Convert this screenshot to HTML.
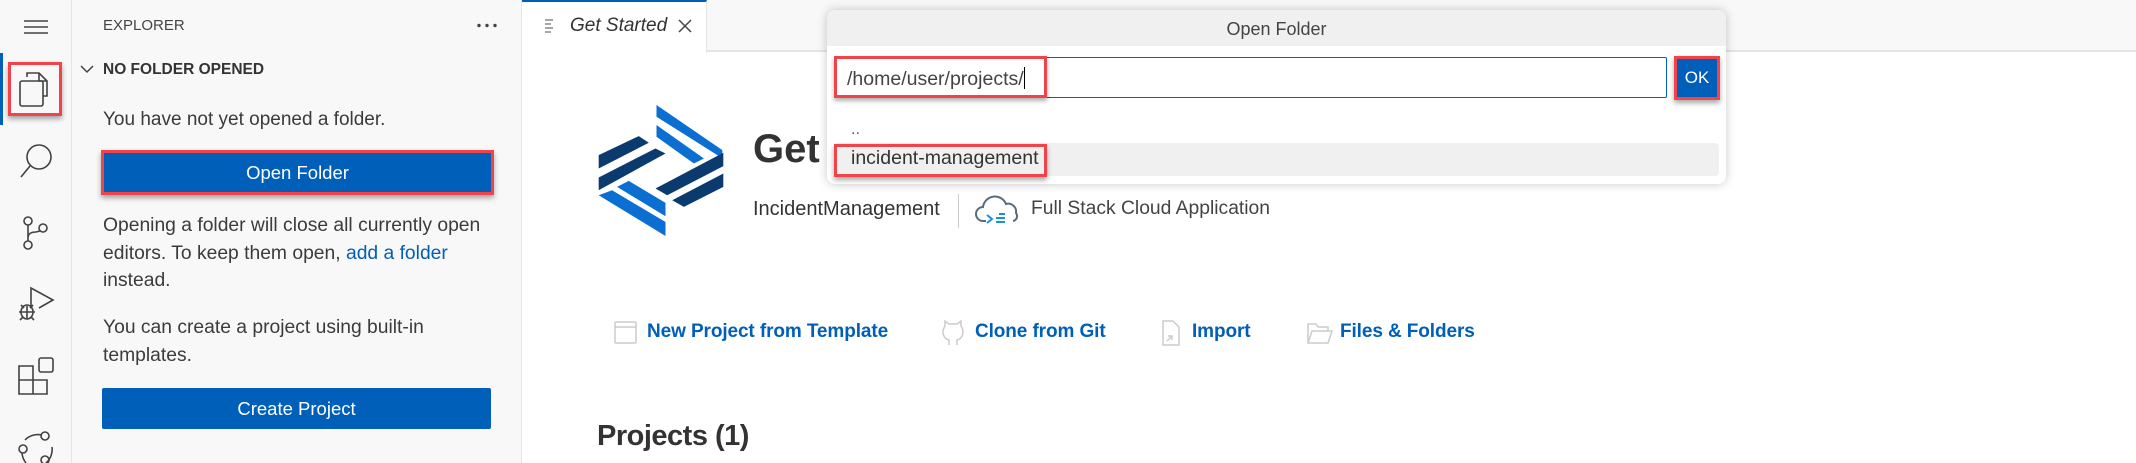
<!DOCTYPE html>
<html><head><meta charset="utf-8"><style>
*{box-sizing:border-box;margin:0;padding:0}
body{width:2136px;height:463px;overflow:hidden;background:#fff;font-family:"Liberation Sans",sans-serif;color:#3b3b3b;position:relative}
.abs{position:absolute}
.act{left:0;top:0;width:72px;height:463px;background:#f8f8f8;border-right:1px solid #e5e5e5}
.side{left:72px;top:0;width:450px;height:463px;background:#f8f8f8;border-right:1px solid #e5e5e5}
.t{white-space:nowrap;position:absolute}
.btn{position:absolute;background:#005fb8;color:#fff;font-size:18.5px;text-align:center;border-radius:2px}
.red{position:absolute;border:3px solid #f0434a;box-shadow:0 3px 5px rgba(0,0,0,.35)}
.link{color:#005fb8;font-weight:bold;font-size:19px;position:absolute;top:321px;white-space:nowrap;letter-spacing:-0.1px}
</style></head><body>
<div class="abs act">
 <svg class="abs" style="left:0;top:0" width="72" height="463" fill="none" stroke="#424242" stroke-width="1.6">
  <path d="M24 21h24M24 27h24M24 33h24"/>
  <rect x="0" y="53" width="3" height="72" fill="#005fb8" stroke="none"/>
  <path d="M27 77v-4h12l8 8v15h-4"/><path d="M39 73v8h8"/><rect x="20" y="81" width="23" height="25" rx="2"/>
  <circle cx="39" cy="157" r="12"/><path d="M30 166l-9 11"/>
  <circle cx="28" cy="221" r="4"/><circle cx="28" cy="245" r="4"/><circle cx="43" cy="228" r="4"/><path d="M28 225v16M28 238q0-6 8-6l4-1"/>
  <path d="M31 307v-19l22 12-14 8"/><ellipse cx="27" cy="312" rx="6" ry="7"/><path d="M19 312h16M21 305l3 3M33 305l-3 3M20 320l3-3M34 320l-3-3M27 306v13"/>
  <path d="M19 366h14v28H19zM19 380h28v14H33"/><rect x="39" y="358" width="14" height="14" rx="2"/>
  <path d="M25 440a18 18 0 0 1 17-5M52 447a18 18 0 0 1-6 16M22 453a18 18 0 0 0 4 10"/><circle cx="45" cy="436" r="4"/><circle cx="23" cy="449" r="4"/><circle cx="45" cy="460" r="4"/>
 </svg>
 <div class="red" style="left:8px;top:62px;width:54px;height:54px"></div>
</div>
<div class="abs side">
 <div class="t" style="left:31px;top:17px;font-size:15px;color:#444">EXPLORER</div>
 <svg class="abs" style="left:405px;top:23px" width="20" height="5" fill="#444"><circle cx="2" cy="2.5" r="1.7"/><circle cx="10" cy="2.5" r="1.7"/><circle cx="18" cy="2.5" r="1.7"/></svg>
 <svg class="abs" style="left:8px;top:64px" width="14" height="10" fill="none" stroke="#444" stroke-width="1.5"><path d="M1 2l6 6 6-6"/></svg>
 <div class="t" style="left:31px;top:61px;font-size:15.5px;font-weight:bold;color:#333">NO FOLDER OPENED</div>
 <div style="position:absolute;left:31px;top:106px;font-size:19px;line-height:27.5px;color:#3b3b3b;white-space:nowrap">You have not yet opened a folder.</div>
 <div class="btn" style="left:30px;top:151px;width:391px;height:43px;line-height:43px">Open Folder</div>
 <div class="red" style="left:29px;top:150px;width:393px;height:45px"></div>
 <div style="position:absolute;left:31px;top:212px;font-size:19.3px;line-height:27.5px;white-space:nowrap">Opening a folder will close all currently open<br>editors. To keep them open, <span style="color:#005fb8">add a folder</span><br>instead.</div>
 <div style="position:absolute;left:31px;top:314px;font-size:19.3px;line-height:27.5px;white-space:nowrap">You can create a project using built-in<br>templates.</div>
 <div class="btn" style="left:30px;top:388px;width:389px;height:41px;line-height:41px">Create Project</div>
</div>
<!-- tab bar -->
<div class="abs" style="left:522px;top:0;width:1614px;height:52px;background:#f8f8f8;border-bottom:2px solid #e5e5e5"></div>
<div class="abs" style="left:522px;top:0;width:185px;height:53px;background:#fff;border-top:2px solid #005fb8;border-right:1px solid #e5e5e5"></div>
<svg class="abs" style="left:545px;top:19px" width="10" height="14" stroke="#888" stroke-width="1.5"><path d="M0 1h8M0 5h6M0 9h8M0 13h6"/></svg>
<div class="t" style="left:570px;top:15px;font-size:19px;font-style:italic;color:#333">Get Started</div>
<svg class="abs" style="left:678px;top:19px" width="14" height="14" stroke="#444" stroke-width="1.5"><path d="M1 1l12 12M13 1L1 13"/></svg>
<!-- welcome -->
<svg class="abs" style="left:597px;top:105px" width="127" height="132" viewBox="50 45 380 395">
 <g fill="#0a6fd1"><polygon points="228,45 425,180 425,200 410,195 228,80"/><polygon points="228,105 370,205 340,220 228,140"/><polygon points="55,315 95,300 255,395 255,437"/><polygon points="110,290 145,272 255,338 255,378"/></g>
 <g fill="#0b3a6e"><polygon points="55,195 175,138 205,158 55,235"/><polygon points="55,262 225,175 255,190 55,300"/><polygon points="225,295 428,188 428,228 260,315"/><polygon points="275,330 428,250 428,290 310,350"/></g>
</svg>
<div class="t" style="left:753px;top:127px;font-size:40px;font-weight:bold;color:#333">Get</div>
<div class="t" style="left:753px;top:198px;font-size:20px;color:#333">IncidentManagement</div>
<div class="abs" style="left:958px;top:194px;width:1px;height:34px;background:#ccc"></div>
<svg class="abs" style="left:974px;top:193px" width="48" height="36" fill="none" stroke-width="2"><path d="M12 28H9a7 7 0 0 1 0-14 12 12 0 0 1 23-3 8 8 0 0 1 10 9 5 5 0 0 1-3 8" stroke="#5a6b7c"/><path d="M13 22l5 4-5 4M22 25h9M22 29h9M25 21h6" stroke="#1a8fe0"/></svg>
<div class="t" style="left:1031px;top:198px;font-size:19.3px;color:#444">Full Stack Cloud Application</div>
<!-- links -->
<svg class="abs" style="left:614px;top:321px" width="24" height="24" fill="none" stroke="#ccc" stroke-width="1.5"><rect x="1" y="1" width="21" height="21" rx="1"/><path d="M1 6h21"/></svg>
<div class="link" style="left:647px">New Project from Template</div>
<svg class="abs" style="left:942px;top:320px" width="22" height="26" fill="none" stroke="#ccc" stroke-width="1.5"><path d="M7 25v-5c-4-1-6-4-6-9 0-2 1-3 2-5L3 1l4 3h8l4-3v5c1 2 2 3 2 5 0 5-2 8-6 9v5"/></svg>
<div class="link" style="left:975px">Clone from Git</div>
<svg class="abs" style="left:1159px;top:320px" width="22" height="26" fill="none" stroke="#ccc" stroke-width="1.5"><path d="M4 1h10l6 6v18H4z"/><path d="M8 21l5-5M9 16h4v4"/></svg>
<div class="link" style="left:1192px">Import</div>
<svg class="abs" style="left:1307px;top:322px" width="26" height="22" fill="none" stroke="#ccc" stroke-width="1.5"><path d="M1 21V2h8l2 3h10v4M1 21l4-12h20l-4 12z"/></svg>
<div class="link" style="left:1340px">Files &amp; Folders</div>
<div class="t" style="left:597px;top:420px;font-size:29px;color:#333;font-weight:bold;letter-spacing:-0.5px">Projects (1)</div>
<!-- dialog -->
<div class="abs" style="left:827px;top:10px;width:899px;height:174px;background:#fff;border-radius:8px;box-shadow:0 0 10px rgba(0,0,0,.22);overflow:hidden">
 <div style="height:36px;background:#f0f0f0;text-align:center;font-size:18px;line-height:38px;color:#444">Open Folder</div>
 <div class="abs" style="left:8px;top:47px;width:832px;height:41px;border:1px solid #005fb8;border-radius:2px"></div>
 <div class="t" style="left:20px;top:57px;font-size:19.5px;color:#444">/home/user/projects/<span style="display:inline-block;width:1px;height:22px;background:#000;vertical-align:-4px"></span></div>
 <div class="abs" style="left:849px;top:47px;width:42px;height:41px;background:#005fb8;color:#fff;font-size:17px;text-align:center;line-height:41px">OK</div>
 <div class="t" style="left:24px;top:111px;font-size:16px;color:#555">..</div>
 <div class="abs" style="left:7px;top:133px;width:885px;height:33px;background:#f0f0f0;border-radius:4px"></div>
 <div class="t" style="left:24px;top:137px;font-size:19.5px;color:#333">incident-management</div>
</div>
<div class="red" style="left:834px;top:56px;width:213px;height:42px;box-shadow:0 3px 4px rgba(0,0,0,.3)"></div>
<div class="red" style="left:1674px;top:56px;width:46px;height:44px"></div>
<div class="red" style="left:834px;top:144px;width:213px;height:33px"></div>
</body></html>
